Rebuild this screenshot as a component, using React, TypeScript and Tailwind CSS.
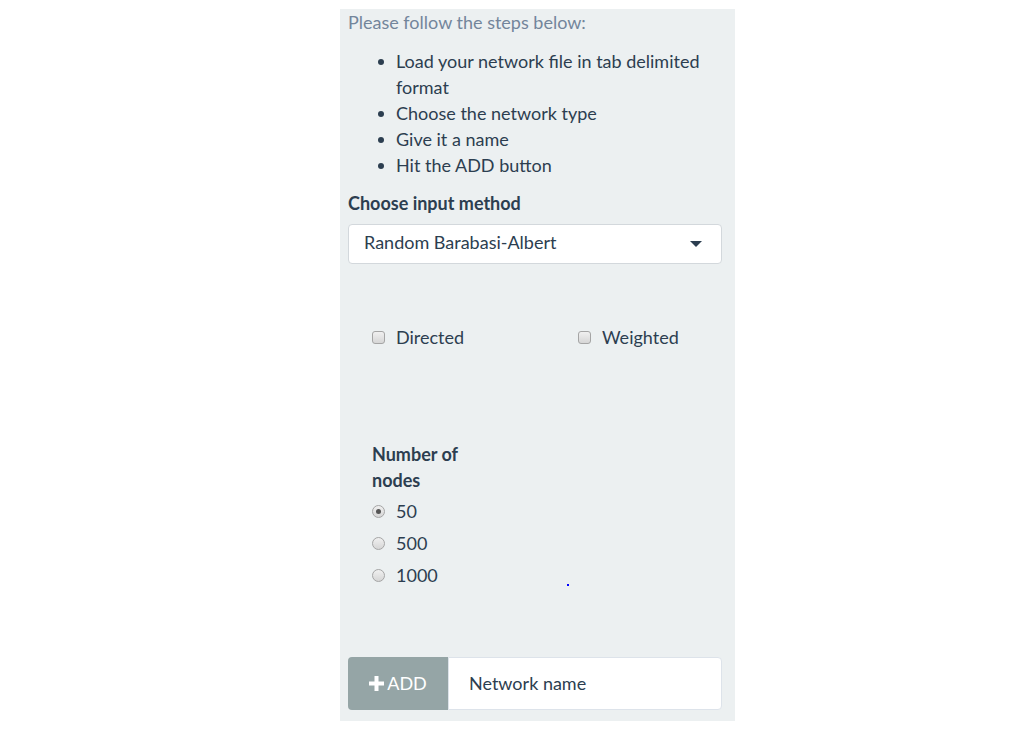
import React from "react";

function Checkbox() {
  return (
    <span className="inline-block w-[13px] h-[13px] rounded-[3px] border border-[#a5a5a5] bg-gradient-to-b from-[#f0f0f0] to-[#d6d6d6]" />
  );
}

function Radio({ checked }: { checked?: boolean }) {
  return (
    <span className="relative inline-flex items-center justify-center w-[13px] h-[13px] rounded-full border border-[#a5a5a5] bg-gradient-to-b from-[#f0f0f0] to-[#d6d6d6]">
      {checked && <span className="w-[5px] h-[5px] rounded-full bg-[#555]" />}
    </span>
  );
}

export default function App() {
  const steps = [
    ["Load your network file in tab delimited", "format"],
    ["Choose the network type"],
    ["Give it a name"],
    ["Hit the ADD button"],
  ];
  return (
    <div
      className="min-h-screen bg-white pt-[9px]"
      style={{ fontFamily: "Lato, 'Open Sans', sans-serif" }}
    >
      <div className="relative ml-[340px] w-[395px] h-[712px] bg-[#ecf0f1] pl-[8px] pr-[13px] text-[18px] text-[#2c3e50] flex flex-col">
        <div className="leading-[26px] text-[#73859b]">Please follow the steps below:</div>
        <ul className="mt-[13px] pl-[30px]">
          {steps.map((s, i) => (
            <li key={i} className="flex leading-[26px]">
              <span className="w-[18px] shrink-0 flex pt-[11px]">
                <span className="w-[6px] h-[6px] rounded-full bg-[#2c3e50]" />
              </span>
              <span>
                {s.map((t, j) => (
                  <div key={j}>{t}</div>
                ))}
              </span>
            </li>
          ))}
        </ul>
        <div className="mt-[12px] leading-[26px] font-bold">Choose input method</div>
        <div className="mt-[8px] h-[40px] bg-white border border-[#d3d8dc] rounded-[4px] flex items-center justify-between pl-[15px] pr-[19px] pb-[3px]">
          <span>Random Barabasi-Albert</span>
          <span className="mt-[3px] w-0 h-0 border-l-[6px] border-r-[6px] border-t-[6px] border-l-transparent border-r-transparent border-t-[#2c3e50]" />
        </div>
        <div className="mt-[60px] flex leading-[26px]">
          <div className="w-[230px] pl-[24px] flex items-center">
            <Checkbox />
            <span className="ml-[11px]">Directed</span>
          </div>
          <div className="flex items-center">
            <Checkbox />
            <span className="ml-[11px]">Weighted</span>
          </div>
        </div>
        <div className="mt-[91px] pl-[24px]">
          <div className="w-[110px] font-bold leading-[26px]">Number of nodes</div>
          <div className="mt-[2px] flex flex-col">
            {[
              ["50", true],
              ["500", false],
              ["1000", false],
            ].map(([v, c]) => (
              <div key={v as string} className="h-[32px] flex items-center">
                <Radio checked={c as boolean} />
                <span className="ml-[11px]">{v as string}</span>
              </div>
            ))}
          </div>
        </div>
        <div className="mt-[66px] flex h-[53px]">
          <button className="w-[100px] h-full bg-[#95a5a6] rounded-l-[4px] text-white flex items-center justify-center">
            <svg width="15" height="15" viewBox="0 0 15 15" className="mr-[3px]">
              <rect x="5.5" y="0" width="4" height="15" fill="white" />
              <rect x="0" y="5.5" width="15" height="4" fill="white" />
            </svg>
            <span>ADD</span>
          </button>
          <div className="flex-1 h-full bg-white border border-[#dde3ea] rounded-r-[4px] flex items-center pl-[20px]">
            Network name
          </div>
        </div>
        <span className="absolute left-[227px] top-[575px] w-[2px] h-[2px] bg-[#0000ff]" />
      </div>
    </div>
  );
}
